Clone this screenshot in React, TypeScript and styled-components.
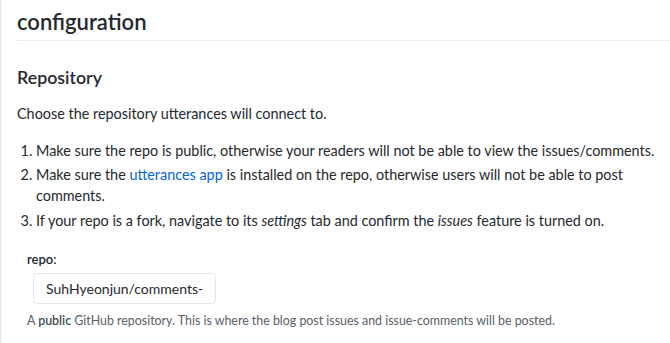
import React from "react"
import styled, { createGlobalStyle } from "styled-components"

const GlobalStyle = createGlobalStyle`
	html, body {
		margin: 0;
		padding: 0;
		background: #fff;
	}
	body {
		font-family: "Lato", "Liberation Sans", sans-serif;
		color: #24292e;
	}
`

const Page = styled.div`
	border-left: 1px solid #e1e4e8;
	padding: 0 0 0 16px;
	min-height: 343px;
	box-sizing: border-box;
	font-size: 14.4px;
	line-height: 21px;
`

const Title = styled.h1`
	margin: 0;
	padding: 8px 0 4px;
	font-size: 22px;
	font-weight: 600;
	line-height: 1.25;
	border-bottom: 1px solid #eaecef;
`

const SectionTitle = styled.h2`
	margin: 25px 0 15px;
	font-size: 17.8px;
	font-weight: 600;
	line-height: 1.25;
`

const Para = styled.p`
	margin: 0 0 16px;
`

const Steps = styled.ol`
	margin: 0 0 16px;
	padding-left: 19px;
	li + li {
		margin-top: 3.5px;
	}
`

const Link = styled.a`
	color: #0366d6;
	text-decoration: none;
`

const Field = styled.div`
	padding-left: 10px;
	display: flex;
	flex-direction: column;
	align-items: flex-start;
`

const Label = styled.label`
	font-weight: 600;
	font-size: 13px;
	margin-top: 2px;
	margin-bottom: 3px;
`

const Input = styled.input`
	width: 183px;
	height: 31px;
	margin-left: 6px;
	box-sizing: border-box;
	padding: 0 8px 0 12px;
	border: 1px solid #e1e4e8;
	border-radius: 5px;
	font-family: inherit;
	font-size: 14px;
	color: #24292e;
	background: #fff;
	outline: none;
`

const Note = styled.p`
	margin: 6px 0 0;
	font-size: 12.4px;
	color: #586069;
	strong {
		font-weight: 600;
		color: #444d56;
	}
`

export default function App() {
	return (
		<>
			<GlobalStyle />
			<Page>
				<Title>configuration</Title>
				<SectionTitle>Repository</SectionTitle>
				<Para>Choose the repository utterances will connect to.</Para>
				<Steps>
					<li>Make sure the repo is public, otherwise your readers will not be able to view the issues/comments.</li>
					<li>
						Make sure the <Link href="#">utterances app</Link> is installed on the repo, otherwise users will not be able to post
						comments.
					</li>
					<li>
						If your repo is a fork, navigate to its <em>settings</em> tab and confirm the <em>issues</em> feature is turned on.
					</li>
				</Steps>
				<Field>
					<Label htmlFor="repo">repo:</Label>
					<Input id="repo" defaultValue="SuhHyeonjun/comments-" />
					<Note>
						A <strong>public</strong> GitHub repository. This is where the blog post issues and issue-comments will be posted.
					</Note>
				</Field>
			</Page>
		</>
	)
}
